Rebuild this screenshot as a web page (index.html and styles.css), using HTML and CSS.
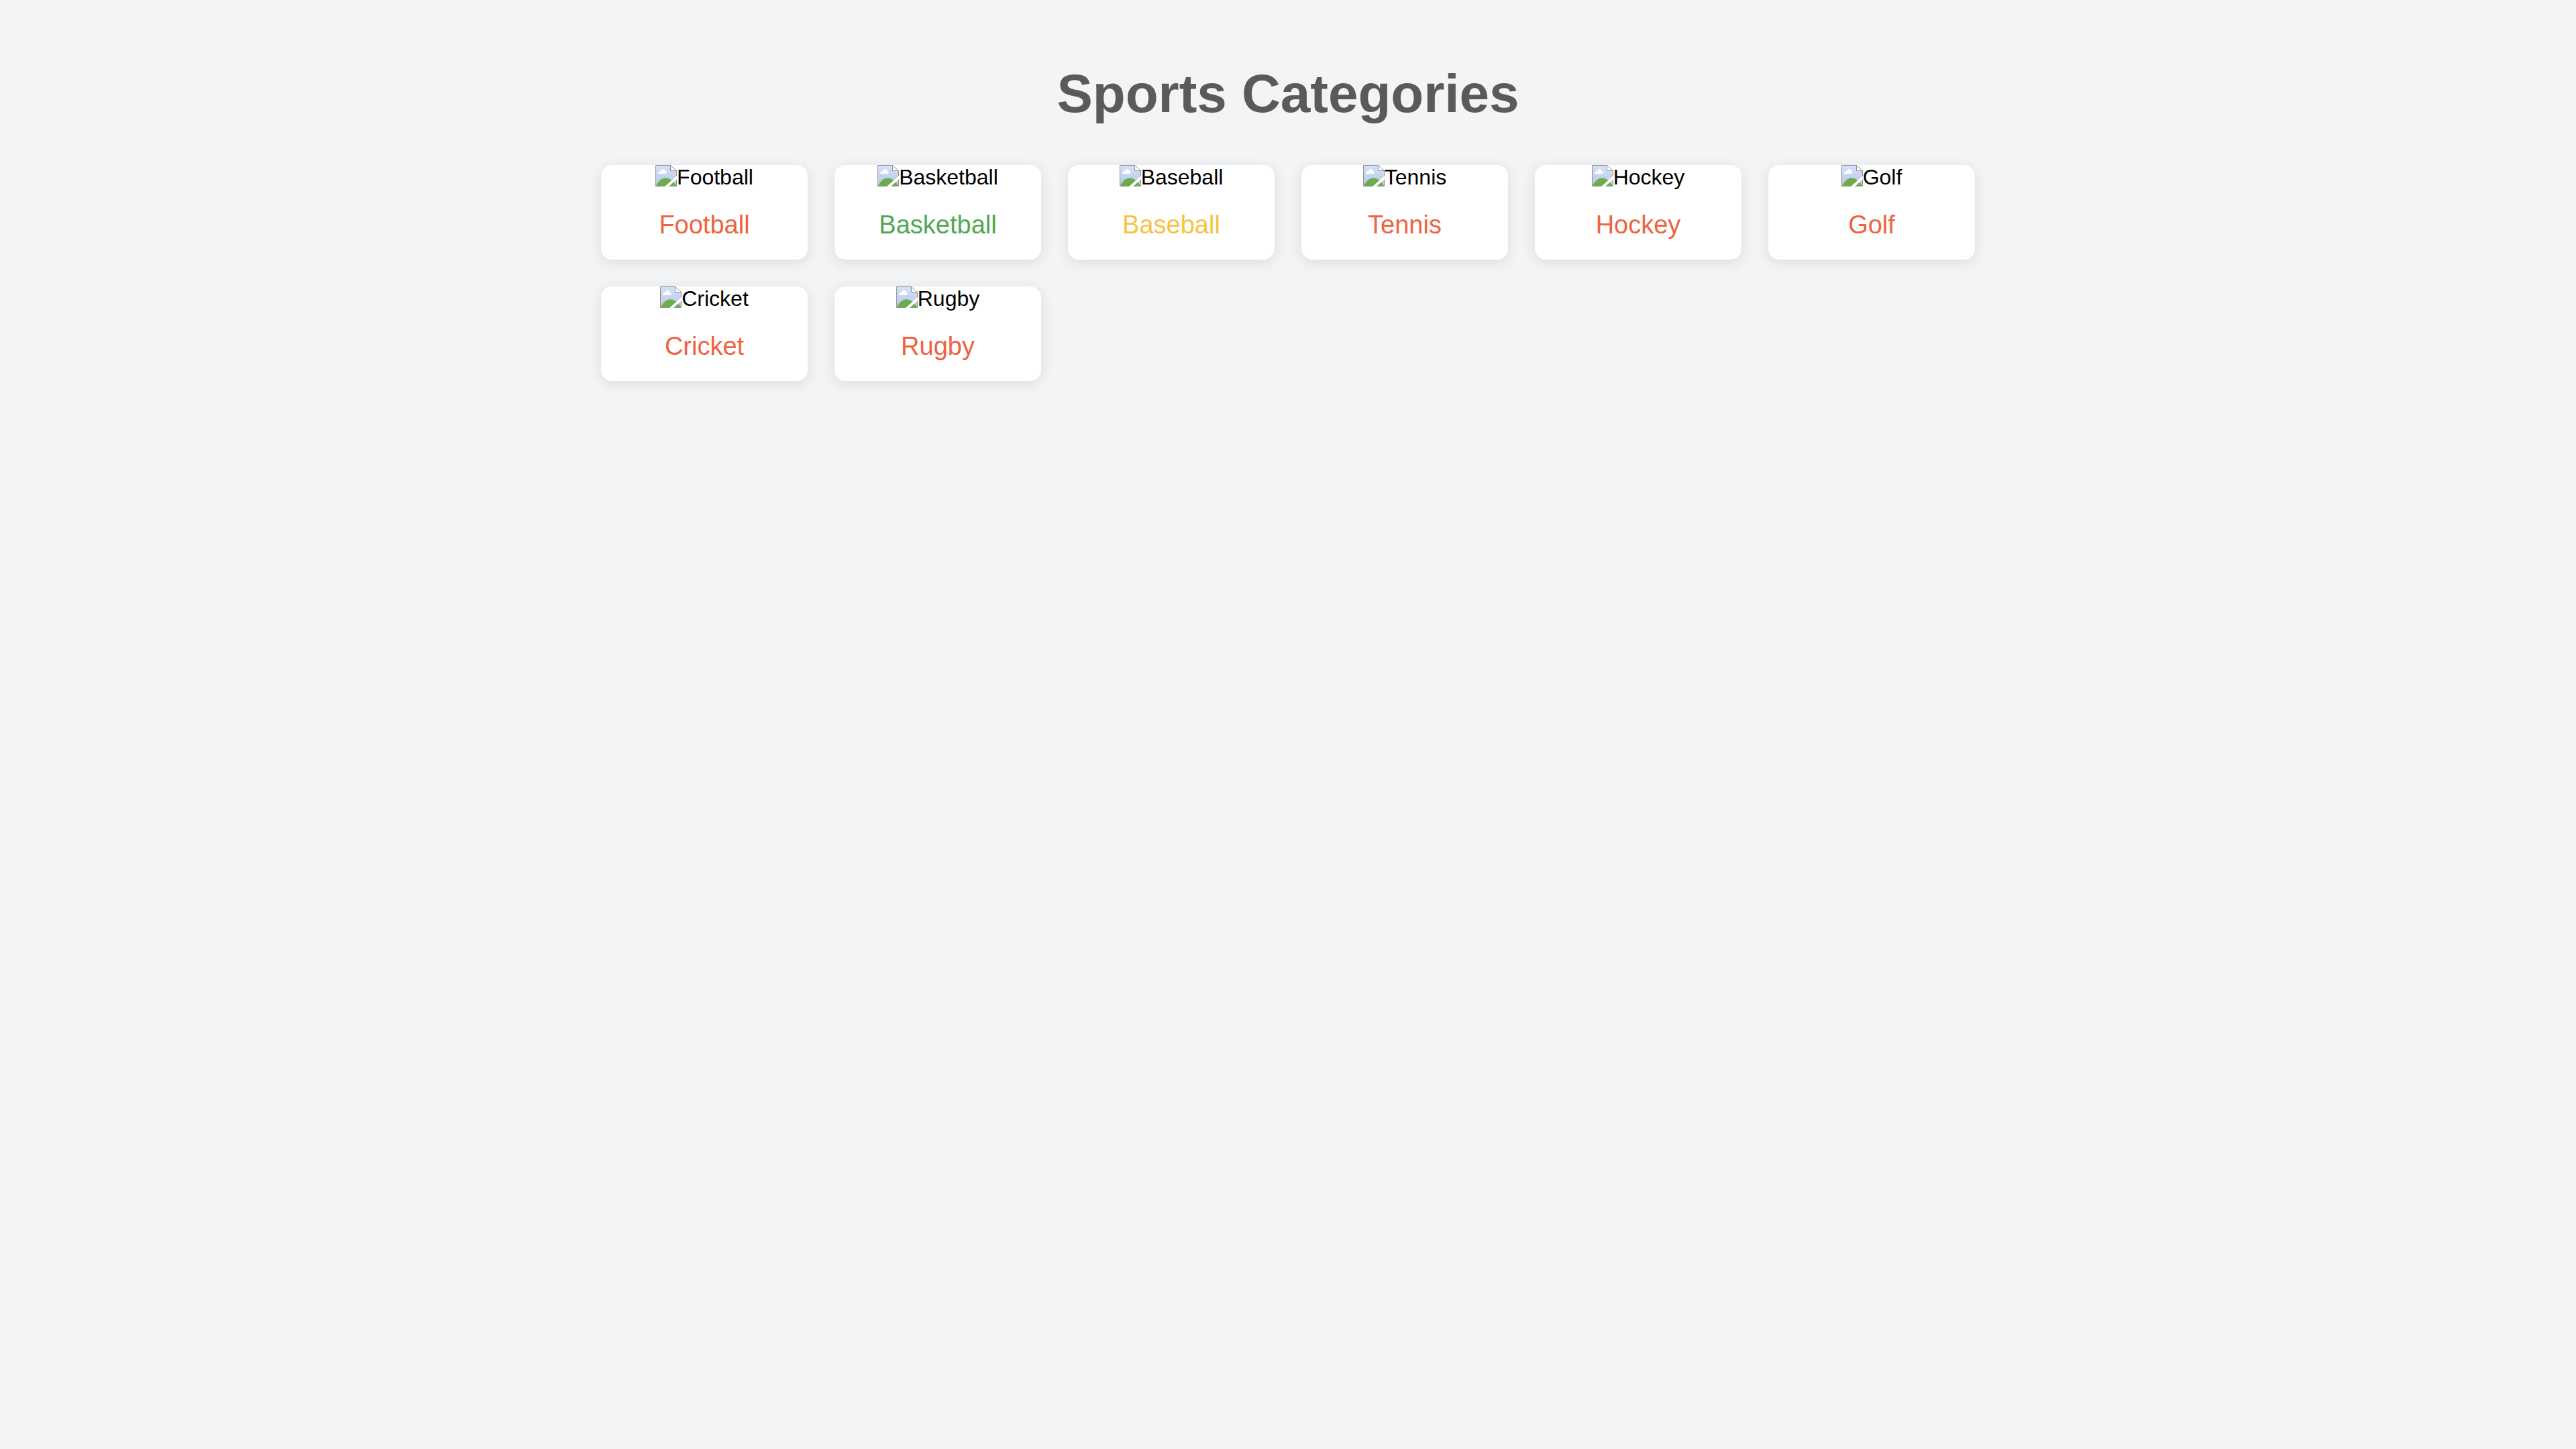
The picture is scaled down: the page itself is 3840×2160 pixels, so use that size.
FILE: index.html
```
<!DOCTYPE html>
<html lang="en">
<head>
<meta charset="utf-8">
<title>Sports Categories</title>
<link rel="stylesheet" href="styles.css">
</head>
<body>
<svg class="sprite" aria-hidden="true">
  <defs>
    <linearGradient id="sky" x1="0" y1="0" x2="0" y2="1"><stop offset="0" stop-color="#d3e1fa"/><stop offset="1" stop-color="#bac8ea"/></linearGradient>
    <symbol id="picture" viewBox="0 0 32 32">
      <path d="M0 0H23L32 9V32H0Z" fill="#fff"/>
      <path d="M1 1H22V9H31V31H1Z" fill="url(#sky)"/>
      <path d="M4 13C4 10 6 9 8 9C9 5 14 5 15 9C17 9 17 13 15 13Z" fill="#fff"/>
      <path d="M1 31C8 17 20 14 31 31Z" fill="#6dac4a"/>
      <path d="M.5 .5H22.500L31.500 8.500V31.500H.5Z" fill="none" stroke="#919191"/>
      <path d="M22.500 .5V8.500H31.500" fill="none" stroke="#919191"/>
      <path d="M14 32L32 16V21L20 32Z" fill="#fff"/>
    </symbol>
  </defs>
</svg>
<main class="container">
  <h1 class="title">Sports Categories</h1>
  <div class="grid">
    <article class="card"><div class="image"><svg class="icon"><use href="#picture"/></svg><span>Football</span></div><p class="label">Football</p></article>
    <article class="card"><div class="image"><svg class="icon"><use href="#picture"/></svg><span>Basketball</span></div><p class="label green">Basketball</p></article>
    <article class="card"><div class="image"><svg class="icon"><use href="#picture"/></svg><span>Baseball</span></div><p class="label yellow">Baseball</p></article>
    <article class="card"><div class="image"><svg class="icon"><use href="#picture"/></svg><span>Tennis</span></div><p class="label">Tennis</p></article>
    <article class="card"><div class="image"><svg class="icon"><use href="#picture"/></svg><span>Hockey</span></div><p class="label">Hockey</p></article>
    <article class="card"><div class="image"><svg class="icon"><use href="#picture"/></svg><span>Golf</span></div><p class="label">Golf</p></article>
    <article class="card"><div class="image"><svg class="icon"><use href="#picture"/></svg><span>Cricket</span></div><p class="label">Cricket</p></article>
    <article class="card"><div class="image"><svg class="icon"><use href="#picture"/></svg><span>Rugby</span></div><p class="label">Rugby</p></article>
  </div>
</main>
</body>
</html>
```
FILE: styles.css
```
* {
  box-sizing: border-box;
}

body {
  margin: 0;
  background: #f3f4f6;
  color: #000;
  font-family: "Liberation Sans", Arial, sans-serif;
  font-size: 32px;
}

.sprite {
  display: block;
  width: 0;
  height: 0;
}

.container {
  max-width: 2128px;
  margin: 0 auto;
  padding: 94px 40px 40px;
}

.title {
  margin: 0 0 60px;
  color: #5a5a5a;
  font-size: 80px;
  line-height: 92px;
  text-align: center;
}

.grid {
  display: grid;
  grid-template-columns: repeat(auto-fill, minmax(300px, 1fr));
  gap: 40px;
}

.card {
  overflow: hidden;
  border-radius: 16px;
  background: #fff;
  box-shadow: 0 4px 20px rgba(0, 0, 0, 0.1);
  text-align: center;
}

.image {
  display: flex;
  justify-content: center;
  line-height: 37px;
}

.icon {
  width: 32px;
  height: 32px;
}

.label {
  margin: 0;
  padding: 30px;
  color: #ee6340;
  font-size: 38px;
  line-height: 44px;
}

.green {
  color: #51a753;
}

.yellow {
  color: #f6c343;
}
```
